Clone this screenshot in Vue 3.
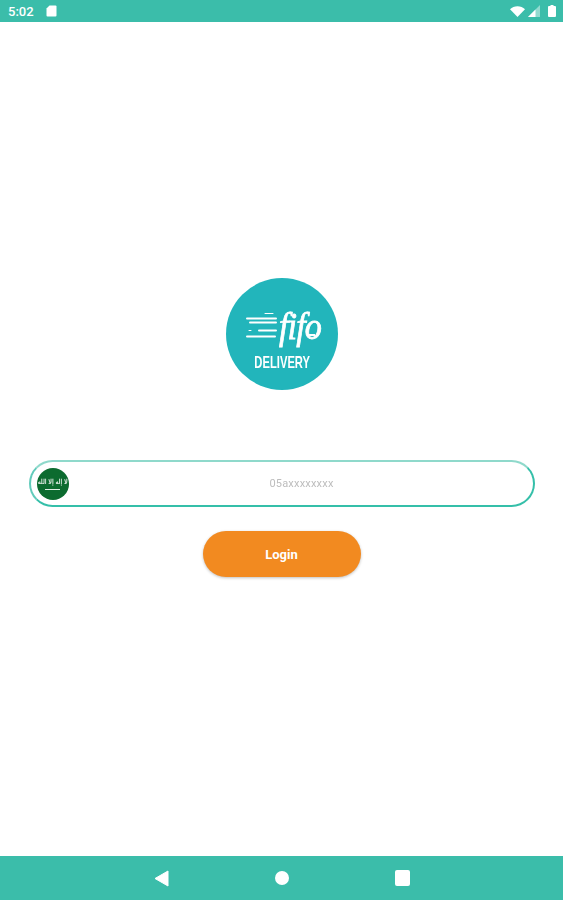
<template>
  <div class="screen">
    <!-- Status bar -->
    <div class="status-bar">
      <span class="time">5:02</span>
      <svg class="sd" width="11" height="12" viewBox="0 0 11 12">
        <path d="M3.5 0.5H9.5a1 1 0 0 1 1 1V10.5a1 1 0 0 1-1 1H1.500a1 1 0 0 1-1-1V3.500Z" fill="#fff" />
      </svg>
      <div class="status-right">
        <svg width="15" height="11" viewBox="0 0 15 11">
          <path d="M0 3.200C2 1.300 4.600 0.200 7.500 0.200S13 1.300 15 3.200L7.500 11Z" fill="#fff" />
        </svg>
        <svg width="12" height="12" viewBox="0 0 12 12">
          <path d="M12 0V12H0Z" fill="#fff" opacity="0.45" />
          <path d="M7.500 4.500V12H0Z" fill="#fff" />
        </svg>
        <svg class="battery" width="8" height="12" viewBox="0 0 8 12">
          <path d="M2.500 0H5.500V1H7a1 1 0 0 1 1 1V11a1 1 0 0 1-1 1H1a1 1 0 0 1-1-1V2a1 1 0 0 1 1-1H2.500Z" fill="#fff" />
        </svg>
      </div>
    </div>

    <!-- Login -->
    <div class="content">
      <div class="logo">
        <div class="brand">
          <svg class="speed" width="31" height="30" viewBox="0 0 31 30">
            <g stroke="#fff" stroke-linecap="round">
              <path d="M19 1.500H27" stroke-width="1" />
              <path d="M1 6.500H30" stroke-width="2" />
              <path d="M4 10.500H30" stroke-width="2" />
              <path d="M13 18.500H30" stroke-width="2" />
              <path d="M3 18.500H5" stroke-width="1" />
              <path d="M1 24.500H29" stroke-width="2" />
            </g>
          </svg>
          <span class="fifo">fifo</span>
          <span class="dash"></span>
        </div>
        <div class="delivery">DELIVERY</div>
      </div>

      <div class="phone-field">
        <div class="flag">
          <span class="shahada">لا إله إلا الله</span>
          <span class="sword"></span>
        </div>
        <input class="phone-input" type="text" placeholder="05axxxxxxxx" />
      </div>

      <button class="login-btn">Login</button>
    </div>

    <!-- Nav bar -->
    <div class="nav-bar">
      <svg width="15" height="17" viewBox="0 0 15 17">
        <path d="M14 1V16L1 8.500Z" fill="#fff" stroke="#fff" stroke-linejoin="round" />
      </svg>
      <span class="nav-home"></span>
      <span class="nav-square"></span>
    </div>
  </div>
</template>

<script setup>
</script>

<style scoped>
.screen {
  width: 563px;
  height: 900px;
  display: flex;
  flex-direction: column;
  background: #fff;
  font-family: Roboto, "Liberation Sans", sans-serif;
}

.status-bar {
  height: 22px;
  flex-shrink: 0;
  display: flex;
  align-items: center;
  padding: 0 7px 0 8px;
  box-sizing: border-box;
  background: #3bbdaa;
  color: #fff;
}

.time {
  font-size: 13px;
  font-weight: 500;
  width: 38px;
}

.status-right {
  margin-left: auto;
  display: flex;
  align-items: center;
  gap: 3px;
}

.battery {
  margin-left: 5px;
}

.content {
  flex: 1;
  display: flex;
  flex-direction: column;
  align-items: center;
  padding-top: 256px;
}

.logo {
  width: 112px;
  height: 112px;
  border-radius: 50%;
  background: #22b5bb;
  display: flex;
  flex-direction: column;
  align-items: center;
  color: #fff;
  padding-top: 28px;
  box-sizing: border-box;
  filter: blur(0.4px);
}

.brand {
  display: flex;
  align-items: center;
  height: 44px;
  width: 76px;
  margin-left: 4px;
  position: relative;
}

.speed {
  flex-shrink: 0;
  margin-top: -2px;
}

.fifo {
  font-family: "Liberation Serif", serif;
  font-style: italic;
  font-size: 38px;
  line-height: 44px;
  letter-spacing: -1px;
  margin-left: 2px;
  margin-top: -4px;
  -webkit-text-stroke: 0.8px #fff;
  transform: scaleX(0.9);
  transform-origin: left center;
}

.dash {
  position: absolute;
  left: 62px;
  top: 28px;
  width: 7px;
  height: 1.500px;
  background: #fff;
}

.delivery {
  font-family: "Liberation Sans", sans-serif;
  font-weight: 700;
  font-size: 17px;
  transform: scaleX(0.66);
  margin-top: 4px;
  margin-left: 2px;
  line-height: 18px;
  white-space: nowrap;
}

.phone-field {
  width: 506px;
  height: 47px;
  margin-top: 70px;
  box-sizing: border-box;
  border: 2px solid #35bfa9;
  border-top-color: #8fd9cb;
  border-left-color: #62cbbb;
  border-radius: 24px;
  display: flex;
  align-items: center;
  padding-left: 6px;
}

.flag {
  width: 32px;
  height: 32px;
  flex-shrink: 0;
  border-radius: 50%;
  background: #0c6b2f;
  display: flex;
  flex-direction: column;
  align-items: center;
  justify-content: center;
  overflow: hidden;
  color: #d5e4da;
  filter: blur(0.4px);
}

.shahada {
  font-family: "DejaVu Sans", sans-serif;
  font-size: 7px;
  font-weight: 700;
  line-height: 10px;
  white-space: nowrap;
  transform: scaleX(0.72);
}

.sword {
  width: 15px;
  height: 1px;
  margin-top: 2px;
  background: #dfeee4;
}

.phone-input {
  flex: 1;
  min-width: 0;
  border: none;
  outline: none;
  background: transparent;
  text-align: center;
  font-family: Roboto, sans-serif;
  font-size: 11px;
  letter-spacing: 0.2px;
  padding: 0 0 0 2px;
  filter: blur(0.3px);
}

.phone-input::placeholder {
  color: #bdbdbd;
  opacity: 1;
}

.login-btn {
  width: 158px;
  height: 46px;
  margin-top: 24px;
  border: none;
  border-radius: 23px;
  background: #f28a20;
  color: #fff;
  font-family: Roboto, sans-serif;
  font-size: 13px;
  font-weight: 700;
  box-shadow: 0 1px 3px rgba(0, 0, 0, 0.25);
}

.nav-bar {
  height: 44px;
  flex-shrink: 0;
  display: flex;
  align-items: center;
  justify-content: center;
  gap: 106px;
  background: #3bbdaa;
}

.nav-home {
  width: 14px;
  height: 14px;
  border-radius: 50%;
  background: #fff;
}

.nav-square {
  width: 15px;
  height: 16px;
  border-radius: 2px;
  background: #fff;
}
</style>
